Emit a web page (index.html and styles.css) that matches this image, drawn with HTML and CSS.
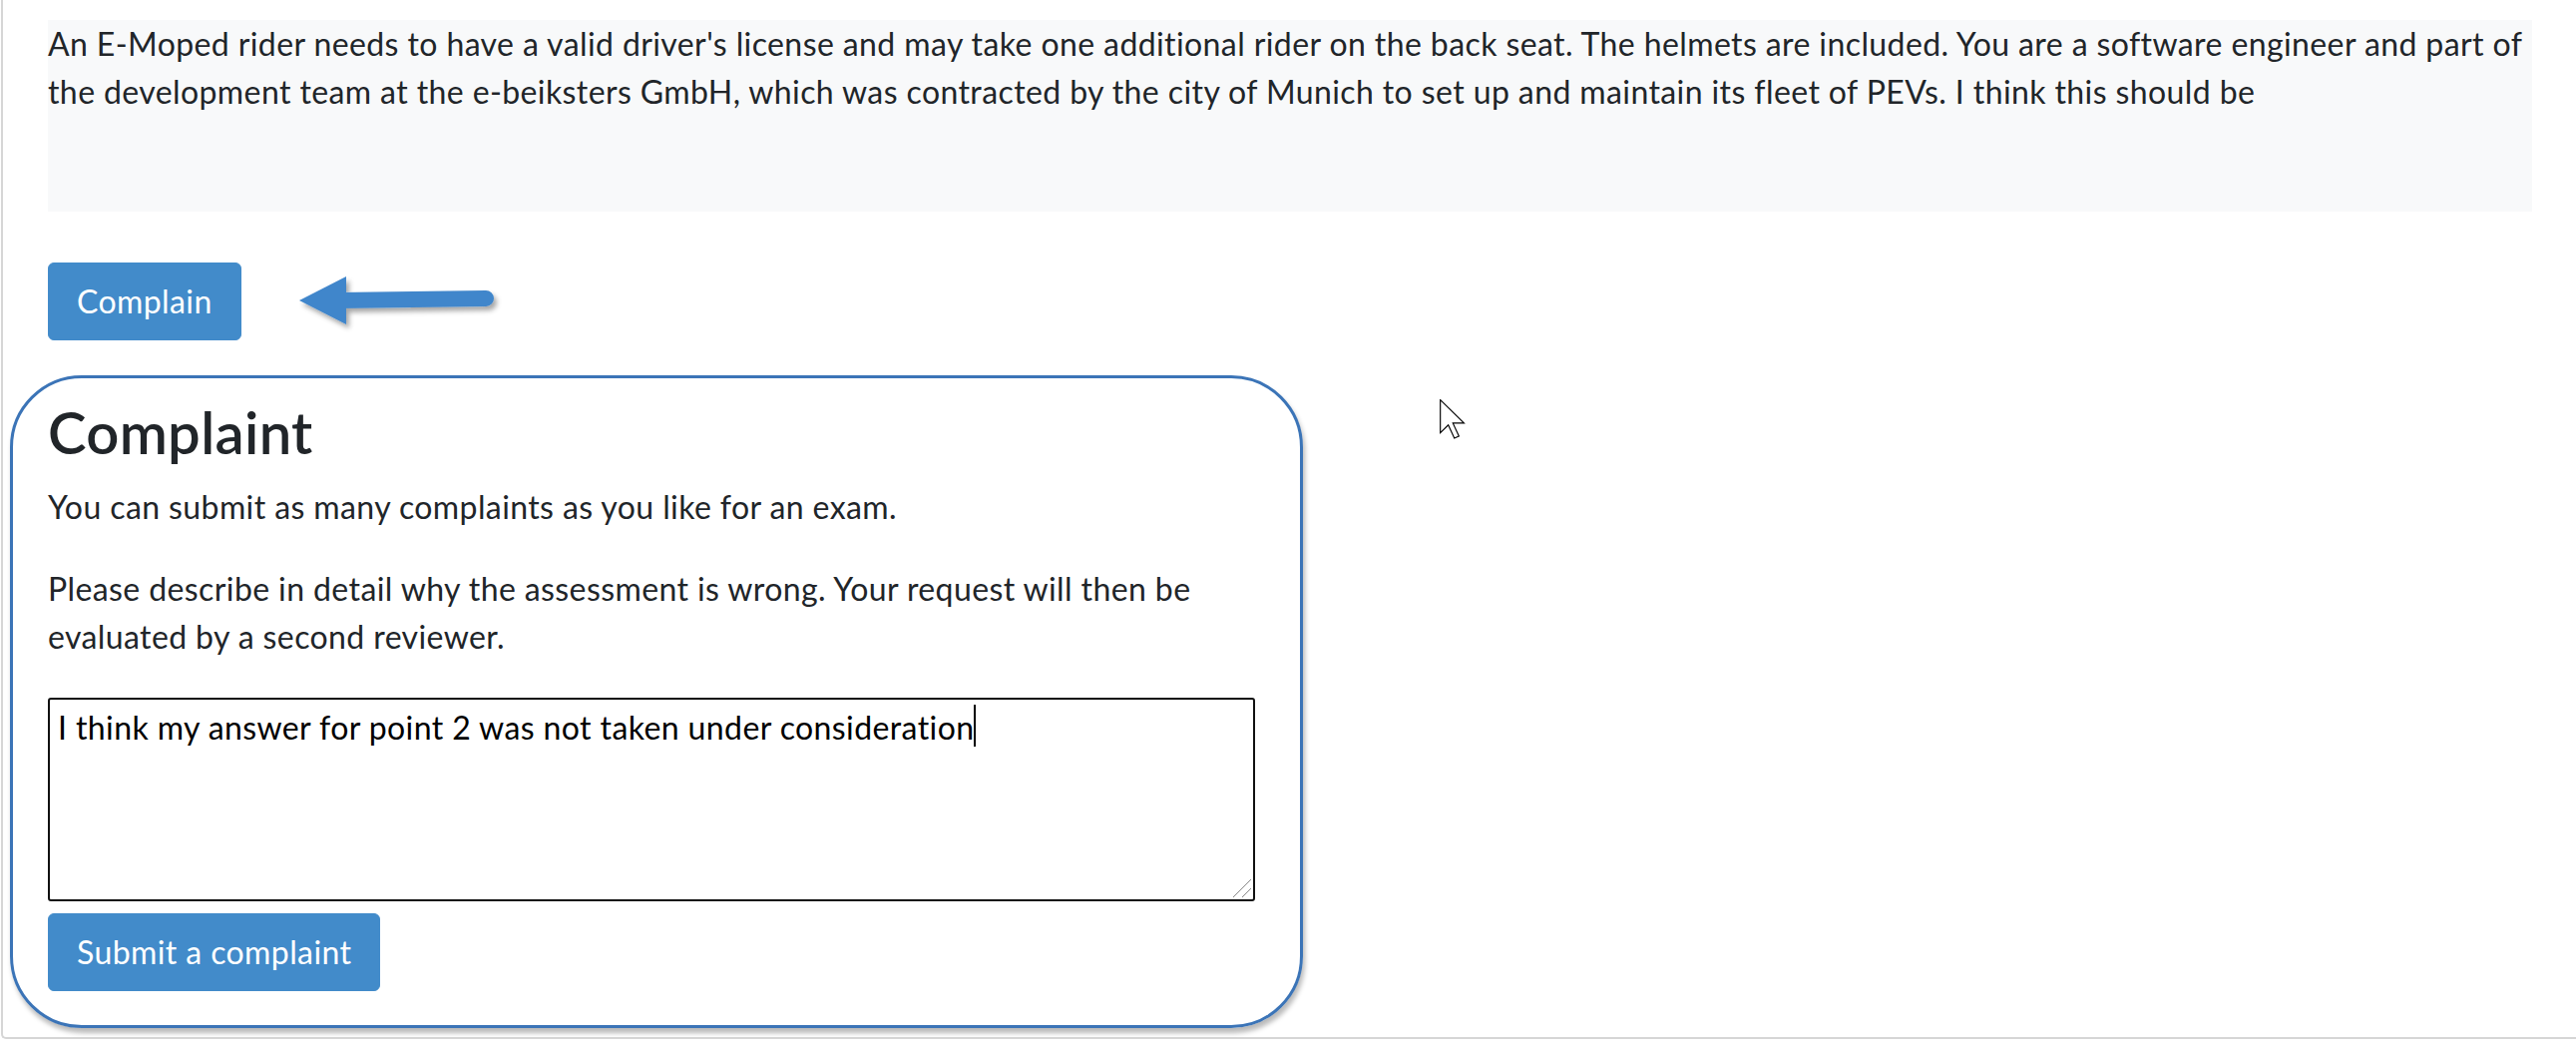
FILE: index.html
```html
<!DOCTYPE html>
<html lang="en">
<head>
<meta charset="utf-8">
<title>Complaint</title>
<link rel="stylesheet" href="styles.css">
</head>
<body>
<div class="page">
  <div class="exercise-text">An E-Moped rider needs to have a valid driver's license and may take one additional rider on the back seat. The helmets are included. You are a software engineer and part of the development team at the e-beiksters GmbH, which was contracted by the city of Munich to set up and maintain its fleet of PEVs. I think this should be</div>

  <div class="action-row">
    <button class="btn btn-primary" type="button">Complain</button>
    <svg class="arrow" width="204" height="60" viewBox="0 0 204 60" aria-hidden="true">
      <defs>
        <filter id="arrowShadow" x="-10%" y="-30%" width="130%" height="180%">
          <feDropShadow dx="3" dy="4" stdDeviation="2.5" flood-color="#000" flood-opacity="0.35"/>
        </filter>
      </defs>
      <g filter="url(#arrowShadow)">
        <line x1="40" y1="28" x2="187" y2="26" stroke="#4186cb" stroke-width="16" stroke-linecap="round"/>
        <polygon points="0,28 47,4 47,52" fill="#4186cb"/>
      </g>
    </svg>
  </div>

  <section class="complaint">
    <h3 class="complaint-title">Complaint</h3>
    <p class="note">You can submit as many complaints as you like for an exam.</p>
    <p class="note note-last">Please describe in detail why the assessment is wrong. Your request will then be evaluated by a second reviewer.</p>
    <div class="textbox" role="textbox" aria-multiline="true">I think my answer for point 2 was not taken under consideration<span class="caret"></span>
      <svg class="grip" width="20" height="20" viewBox="0 0 20 20" aria-hidden="true">
        <line x1="1" y1="19" x2="19" y2="1" stroke="#8a8a8a" stroke-width="1"/>
        <line x1="10" y1="19" x2="19" y2="10" stroke="#8a8a8a" stroke-width="1"/>
      </svg>
    </div>
    <button class="btn btn-primary btn-submit" type="button">Submit a complaint</button>
  </section>

  <svg class="cursor" width="28" height="42" viewBox="0 0 13.3 20" aria-hidden="true">
    <polygon points="0.3,0.3 0.3,16 4.1,12.3 7,18.6 9.2,17.6 6.3,11.4 11.6,11.4" fill="#fff" stroke="#000" stroke-width="0.55" stroke-linejoin="miter"/>
  </svg>
</div>
</body>
</html>
```

FILE: styles.css
```css
html, body {
  margin: 0;
  padding: 0;
  background: #ffffff;
}

body {
  font-family: "Segoe UI", Lato, "Open Sans", sans-serif;
  font-size: 32px;
  line-height: 48px;
  letter-spacing: 0.4px;
  color: #212529;
}

.page {
  position: relative;
  margin-left: 1px;
  width: 2581px;
  box-sizing: border-box;
  padding: 20px 44px 9px 45px;
  border-left: 2px solid #d6d6d6;
  border-bottom: 2px solid #d6d6d6;
  border-bottom-left-radius: 5px;
}

.exercise-text {
  background: #f8f9fa;
  height: 192px;
  white-space: normal;
}

.action-row {
  display: flex;
  align-items: center;
  gap: 58px;
  margin-top: 51px;
}

.arrow {
  display: block;
  margin-top: 2px;
}

.btn {
  font-family: inherit;
  font-size: 32px;
  line-height: 48px;
  letter-spacing: inherit;
  padding: 14px 28px;
  border: 1px solid #428bca;
  border-radius: 6px;
  background: #428bca;
  color: #ffffff;
  cursor: pointer;
}

.complaint {
  width: 1296px;
  box-sizing: border-box;
  margin: 35px 0 0 -38px;
  padding: 20px 45px 34px 35px;
  border: 3px solid #3b74b7;
  border-radius: 72px;
  box-shadow: 2px 5px 5px rgba(0, 0, 0, 0.28);
}

.complaint-title {
  margin: 0 0 18px;
  font-size: 58px;
  line-height: 67px;
  font-weight: 600;
  letter-spacing: 0.3px;
  color: #212529;
}

.note {
  margin: 0 0 34px;
}

.note-last {
  margin-bottom: 37px;
}

.textbox {
  position: relative;
  height: 204px;
  box-sizing: border-box;
  padding: 4px 8px;
  border: 2px solid #111111;
  border-radius: 3px;
  color: #000000;
  background: #ffffff;
}

.caret {
  display: inline-block;
  width: 2px;
  height: 42px;
  background: #000000;
  vertical-align: -7px;
}

.grip {
  position: absolute;
  right: 1px;
  bottom: 1px;
}

.btn-submit {
  display: block;
  margin-top: 12px;
}

.cursor {
  position: absolute;
  left: 1440px;
  top: 400px;
}
```
